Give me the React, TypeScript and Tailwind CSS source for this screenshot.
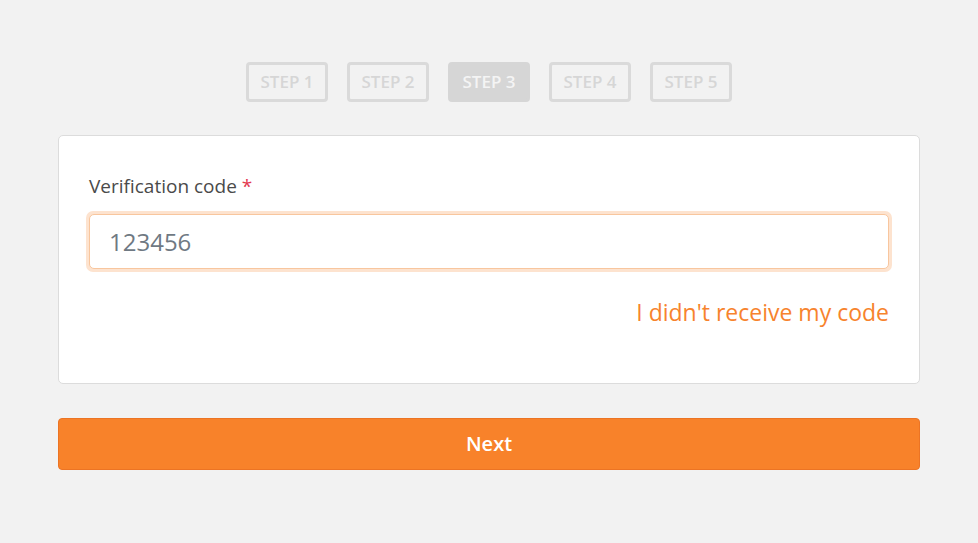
import { useState } from 'react';

const STEPS = [1, 2, 3, 4, 5];

export default function App() {
  const [code, setCode] = useState('123456');
  const current = 3;

  return (
    <div className="min-h-[543px] w-full bg-[#f2f2f2] font-['Open_Sans',sans-serif]">
      <div className="mx-auto w-[862px] pt-[62px]">
        {/* Steps */}
        <div className="flex justify-center gap-[19px]">
          {STEPS.map(s => (
            <div
              key={s}
              className={`flex h-[40px] w-[82px] items-center justify-center rounded-[4px] border-[3px] text-[17px] font-semibold ${
                s === current
                  ? 'border-[#d6d6d6] bg-[#d6d6d6] text-[#f4f4f4]'
                  : 'border-[#dadada] text-[#d6d6d6]'
              }`}
            >
              STEP {s}
            </div>
          ))}
        </div>

        {/* Card */}
        <div className="mt-[33px] rounded-[5px] border border-[#dcdcdc] bg-white px-[30px] pt-[38px] pb-[56px]">
          <label className="block text-[19px] leading-[24px] text-[#4a4a4a]">
            Verification code <span className="text-[#e3384f]">*</span>
          </label>
          <div className="mt-[13px] rounded-[7px] bg-[#fde3cf] p-[3px] -mx-[3px]">
            <input
              value={code}
              onChange={e => setCode(e.target.value)}
              className="block h-[55px] w-full rounded-[5px] border border-[#f8c69e] bg-white px-[19px] text-[24px] text-[#6f7983] outline-none"
            />
          </div>
          <div className="mt-[25px] flex justify-end">
            <a className="text-[23px] leading-[30px] text-[#f7832d]">I didn't receive my code</a>
          </div>
        </div>

        {/* Next */}
        <button className="mt-[34px] flex h-[52px] w-full items-center justify-center rounded-[4px] border border-[#ec7424] bg-[#f8822a] text-[20px] font-semibold text-white">
          Next
        </button>
      </div>
    </div>
  );
}
